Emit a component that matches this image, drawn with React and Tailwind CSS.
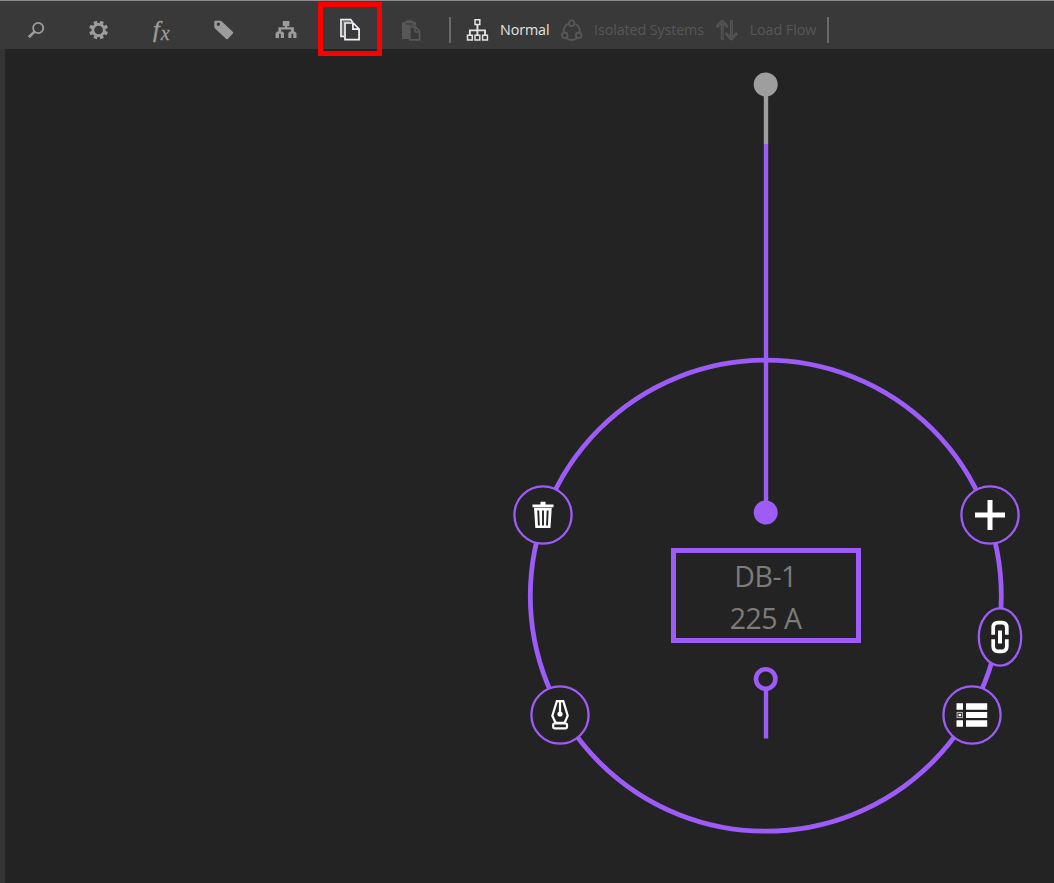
import React from 'react';

function ToolCell({ label, className = '', children }) {
  return (
    <button aria-label={label} className={`flex h-full w-[62.5px] shrink-0 items-center justify-center ${className}`}>
      <svg width="24" height="24" viewBox="0 0 24 24" fill="none" className="overflow-visible">
        {children}
      </svg>
    </button>
  );
}

function Toolbar() {
  return (
    <header className="relative flex h-[49px] items-center border-t border-[#8c8c8c] bg-[#393939] pt-[10px] pl-[5px] text-[#9c9c9c]">
      <ToolCell label="Search">
        <circle cx="14.2" cy="10" r="5.1" stroke="currentColor" strokeWidth="1.8" />
        <path d="M10.5 13.6 4.8 19.2" stroke="currentColor" strokeWidth="2.6" />
      </ToolCell>
      <ToolCell label="Settings">
        <circle cx="11.6" cy="12" r="5.7" stroke="currentColor" strokeWidth="2.7" />
        <g fill="currentColor">
          {[22.5, 67.5, 112.5, 157.5, 202.5, 247.5, 292.5, 337.5].map((a) => (
            <rect key={a} x="9.8" y="2.6" width="3.6" height="3.4" transform={`rotate(${a} 11.6 12)`} />
          ))}
        </g>
      </ToolCell>
      <button aria-label="Function" className="flex h-full w-[62.5px] shrink-0 items-center justify-center font-['Liberation_Serif',serif] italic">
        <span className="mt-[-2px] text-[24px] leading-none [-webkit-text-stroke:0.4px_currentColor]">f</span>
        <span className="mt-[5px] ml-px text-[20px] leading-none [-webkit-text-stroke:0.3px_currentColor]">x</span>
      </button>
      <ToolCell label="Tag">
        <path fill="currentColor" fillRule="evenodd" d="M3.6 2.8H8.6L9.6 3.3 21 14Q21.6 14.8 21 15.5L15.8 21Q15 21.6 14.2 20.9L2.8 10.2 2.3 9V4.2Q2.3 2.8 3.6 2.8ZM6.3 4.5a1.7 1.7 0 1 0 0 3.4 1.7 1.7 0 0 0 0-3.4Z" />
      </ToolCell>
      <ToolCell label="Hierarchy">
        <path fill="currentColor" d="M8.8 3h6.6v5h-2v1.2h6.5v4.2h.9l1.7 1.5V20h-3.2v-4.3h-1.8V20h-3.2v-5.1l1.6-1.5h1.2v-2H7.2v2h1.2L10 14.9V20H6.8v-4.3H5V20H1.6v-5.1l1.7-1.5h1.1V9.2h6.4V8h-2Z" />
      </ToolCell>
      <ToolCell label="Copy" className="text-[#f0f4fa]">
        <path d="M7.2 18.4H4V1.6h9.6l2 2.7" stroke="currentColor" strokeWidth="1.7" />
        <path d="M6 18V3.8h7" stroke="#999" strokeWidth="1" />
        <path d="M8 5h8.2l5.9 6v10.7H8ZM15.9 5.2v6H22" stroke="currentColor" strokeWidth="1.7" />
      </ToolCell>
      <ToolCell label="Paste" className="text-[#575757]">
        <path fill="currentColor" d="M3 4.2h3.3Q7 2 10.5 2T14.7 4.2H17v3.5h-7V21H3Z" />
        <path d="M7 5.9h7" stroke="#393939" strokeWidth="1.3" />
        <path d="M10.8 9h5.8l3.9 4v8.9h-9.7ZM16 9v5h4.5" fill="#393939" stroke="currentColor" strokeWidth="1.7" />
      </ToolCell>

      <div className="ml-[6.5px] h-[26px] w-[2px] shrink-0 bg-[#6a6a6a]" />

      <div className="flex items-center font-['Open_Sans','Noto_Sans',sans-serif] text-[14.3px] leading-none whitespace-nowrap">
        <button className="ml-[15px] flex items-center gap-[10px] text-[#e4e4e4]">
          <svg width="24" height="24" viewBox="0 0 24 24" fill="none" stroke="currentColor" strokeWidth="1.5">
            <path d="M9 1.8h4.8v4.8H9ZM1.5 17.3h4.8v4.8H1.5ZM9 17.3h4.8v4.8H9ZM16.6 17.3h4.8v4.8h-4.8Z" />
            <path d="M11.4 6.6v10.5M3.9 17v-4.6H19V17" strokeWidth="1.9" />
          </svg>
          <span className="w-[49px] tracking-[-0.1px]">Normal</span>
        </button>
        <button className="ml-[11px] flex items-center gap-[11px] text-[#575757]">
          <svg width="23" height="24" viewBox="0 0 23 24" fill="none" stroke="currentColor" strokeWidth="1.8">
            <path d="M8 5.9A8.8 8.8 0 0 0 3.6 14M15.5 5.9A8.8 8.8 0 0 1 19.8 14M6.4 20.2Q11.7 23.8 17 20.2" />
            <circle cx="11.7" cy="5.2" r="2.8" />
            <circle cx="4.7" cy="17.3" r="2.8" />
            <circle cx="18.7" cy="17.3" r="2.8" />
          </svg>
          <span className="w-[110px] tracking-[-0.1px]">Isolated Systems</span>
        </button>
        <button className="ml-[11px] flex items-center gap-[10px] text-[#575757]">
          <svg width="24" height="24" viewBox="0 0 24 24" fill="none" strokeLinecap="round" strokeLinejoin="round">
            <path d="M7.2 21V4M2.4 8.3l4.8-5 4.8 5M16.4 3.3V20.5M11.6 15.9l4.8 5 4.8-5" stroke="currentColor" strokeWidth="2.9" />
            <path d="M7.2 21V4M2.4 8.3l4.8-5 4.8 5M16.4 3.3V20.5M11.6 15.9l4.8 5 4.8-5" stroke="#454545" strokeWidth="0.9" />
          </svg>
          <span className="w-[68px] tracking-[-0.05px]">Load Flow</span>
        </button>
      </div>
      <div className="ml-[10px] h-[26px] w-[2px] shrink-0 bg-[#6a6a6a]" />
      <div className="absolute top-px left-[318px] z-10 h-[54px] w-[64px] border-[5px] border-[#fc0000]" />
    </header>
  );
}

function RingButton({ label, className, rx = 28.6, children }) {
  return (
    <button aria-label={label} className={`absolute size-[60px] ${className}`}>
      <svg width="60" height="60" viewBox="-30 -30 60 60" fill="none" className="block text-white">
        <ellipse rx={rx} ry="28.6" fill="#232323" stroke="#9d5bf7" strokeWidth="2.3" />
        {children}
      </svg>
    </button>
  );
}

function Canvas() {
  return (
    <main className="relative flex-1 overflow-hidden bg-[#232323]">
      <svg width="1049" height="834" viewBox="5 49 1049 834" fill="none" className="absolute top-0 left-0">
        <circle cx="765.8" cy="595.7" r="235.5" stroke="#9d5bf7" strokeWidth="4.8" />
        <path d="M766 85v59" stroke="#9e9e9e" strokeWidth="4.4" />
        <path d="M766 144v368M766 690v48.5" stroke="#9d5bf7" strokeWidth="4.4" />
        <circle cx="765.7" cy="84.5" r="12" fill="#9e9e9e" />
        <circle cx="765.7" cy="512.5" r="12" fill="#9d5bf7" />
        <circle cx="765.7" cy="679" r="9.7" stroke="#9d5bf7" strokeWidth="4.6" />
      </svg>

      <div className="absolute top-[499px] left-[665.6px] flex h-[95px] w-[190px] flex-col items-center border-[5px] border-[#9d5bf7] pt-[2px] font-['Open_Sans','Noto_Sans',sans-serif] text-[28.5px] leading-[42px] tracking-[-0.5px] text-[#7c7c7c]">
        <span>DB-1</span>
        <span>225 A</span>
      </div>

      <RingButton label="Delete" className="top-[436.4px] left-[507.6px]">
        <path d="M-10.5-9.2h21M-2.5-11.8h5" stroke="currentColor" strokeWidth="2.8" />
        <path d="M-8.2-6.5-7 12.4H6.8L8-6.5Z" fill="currentColor" stroke="currentColor" strokeWidth="1.4" />
        <path d="M-4.8-4.5-4.1 10.5M0-4.5v15M4.7-4.5 4 10.5" stroke="#232323" strokeWidth="1.9" />
      </RingButton>
      <RingButton label="Edit" className="top-[636px] left-[525px]">
        <path d="M-3.1-13.8H3.3L7.7.8 4.6 7.8H-4.4L-7.7.8ZM0-13.5V-3" stroke="currentColor" strokeWidth="2.2" />
        <circle cy="-1" r="2.6" fill="currentColor" />
        <rect x="-6.8" y="8.5" width="13.8" height="4.9" rx="1.3" stroke="currentColor" strokeWidth="2.2" />
      </RingButton>
      <RingButton label="Add" className="top-[436.2px] left-[954.6px]">
        <path d="M-15 0H15M0-15V15" stroke="currentColor" strokeWidth="5" />
      </RingButton>
      <RingButton label="Link" rx={21.2} className="top-[558.3px] left-[965.4px]">
        <path d="M-6.8-2.3V-9.3Q-6.8-14.3-2-14.3H2Q6.8-14.3 6.8-9.3V-2.3M-6.8 2.3V9.3Q-6.8 14.3-2 14.3H2Q6.8 14.3 6.8 9.3V2.3" stroke="currentColor" strokeWidth="3.7" />
        <path d="M0-6.5v13" stroke="currentColor" strokeWidth="4" />
      </RingButton>
      <RingButton label="List" className="top-[636px] left-[937px]">
        <path fill="currentColor" d="M-15.5-11.7h6.5v6.5h-6.5ZM-6-11.7h21.2v6.5H-6ZM-6-3h21.2v6H-6ZM-15.5 5.2h6.5v6.5h-6.5ZM-6 5.2h21.2v6.5H-6Z" />
        <rect x="-14.9" y="-2.6" width="5.3" height="5.2" stroke="#bdbdbd" />
        <rect x="-13.5" y="-1.2" width="2.6" height="2.4" fill="currentColor" />
      </RingButton>
    </main>
  );
}

export default function App() {
  return (
    <div className="flex h-[883px] w-[1054px] flex-col overflow-hidden bg-[#343434]">
      <Toolbar />
      <div className="flex flex-1 pl-[5px]">
        <Canvas />
      </div>
    </div>
  );
}
